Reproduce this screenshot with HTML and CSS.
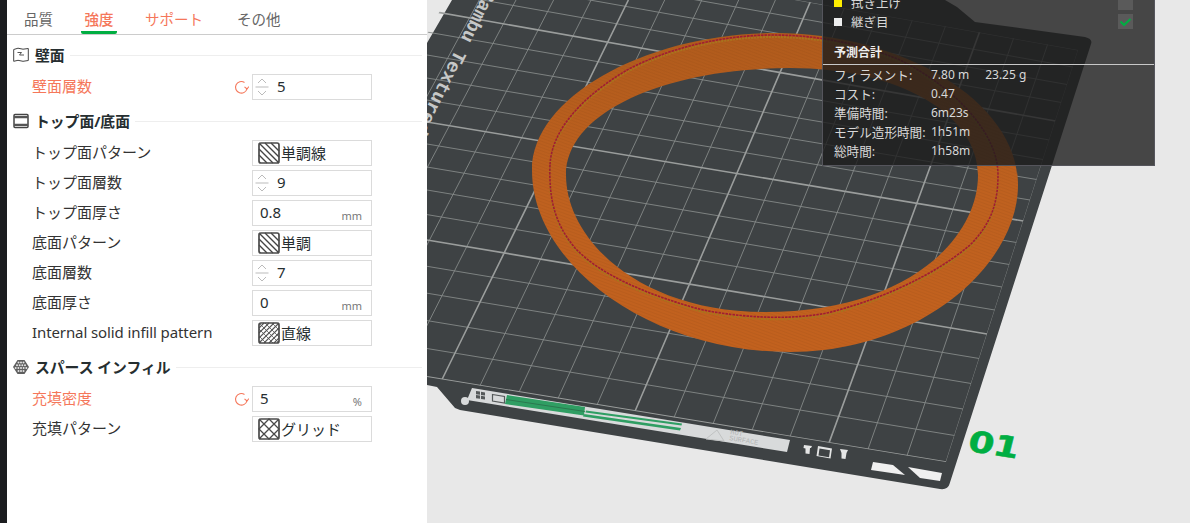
FILE: index.html
```html
<!DOCTYPE html>
<html lang="ja">
<head>
    <meta charset="UTF-8">
    <title>Slicer</title>
    <link rel="stylesheet" href="styles.css">
</head>
<body>
    <div class="app">
        <div class="edge"></div>

        <aside class="panel">
            <nav class="tabs">
                <span class="tab">品質</span>
                <span class="tab tab-active">強度</span>
                <span class="tab tab-changed">サポート</span>
                <span class="tab">その他</span>
            </nav>

            <section class="group">
                <h2 class="group-title">
                    <svg class="group-icon" viewBox="0 0 16 16"><path d="M.7 2.500L5 1.200l5 1 5.300-.7v12l-5.300.8-5-1-4.300 1z" fill="none" stroke="#444" stroke-width="1"/><path d="M4.500 5.500h4l-2 2.500h4.500" fill="none" stroke="#555" stroke-width="1"/></svg>
                    <span>壁面</span>
                    <i class="group-line"></i>
                </h2>
                <div class="row">
                    <label class="row-label changed">壁面層数</label>
                    <svg class="reset" viewBox="0 0 15 15"><path d="M13 8.500A5.800 5.800 0 1 1 10.500 2.500" fill="none" stroke="#f5775a" stroke-width="1.100"/><path d="M10.500 6.800l2.500 2.200 1.900-2.400" fill="none" stroke="#f5775a" stroke-width="1.100"/></svg>
                    <div class="field">
                        <span class="spin"><svg viewBox="0 0 14 22"><path d="M3 7l4-4 4 4M0.500 11h13M3 15l4 4 4-4" fill="none" stroke="#bbb" stroke-width="1"/></svg></span>
                        <span class="value">5</span>
                    </div>
                </div>
            </section>

            <section class="group">
                <h2 class="group-title">
                    <svg class="group-icon" viewBox="0 0 16 16"><rect x="1" y="1.500" width="14" height="13" rx="1" fill="none" stroke="#444" stroke-width="1.500"/><path d="M1 4.200h14M1 11.800h14" stroke="#555" stroke-width="2.200"/></svg>
                    <span>トップ面/底面</span>
                    <i class="group-line"></i>
                </h2>
                <div class="row">
                    <label class="row-label">トップ面パターン</label>
                    <div class="field field-combo">
                        <svg class="pattern" viewBox="0 0 22 22"><use href="#hatch-mono"/></svg>
                        <span>単調線</span>
                    </div>
                </div>
                <div class="row">
                    <label class="row-label">トップ面層数</label>
                    <div class="field">
                        <span class="spin"><svg viewBox="0 0 14 22"><path d="M3 7l4-4 4 4M0.500 11h13M3 15l4 4 4-4" fill="none" stroke="#bbb" stroke-width="1"/></svg></span>
                        <span class="value">9</span>
                    </div>
                </div>
                <div class="row">
                    <label class="row-label">トップ面厚さ</label>
                    <div class="field field-unit">
                        <span class="value">0.8</span>
                        <span class="unit">mm</span>
                    </div>
                </div>
                <div class="row">
                    <label class="row-label">底面パターン</label>
                    <div class="field field-combo">
                        <svg class="pattern" viewBox="0 0 22 22"><use href="#hatch-mono"/></svg>
                        <span>単調</span>
                    </div>
                </div>
                <div class="row">
                    <label class="row-label">底面層数</label>
                    <div class="field">
                        <span class="spin"><svg viewBox="0 0 14 22"><path d="M3 7l4-4 4 4M0.500 11h13M3 15l4 4 4-4" fill="none" stroke="#bbb" stroke-width="1"/></svg></span>
                        <span class="value">7</span>
                    </div>
                </div>
                <div class="row">
                    <label class="row-label">底面厚さ</label>
                    <div class="field field-unit">
                        <span class="value">0</span>
                        <span class="unit">mm</span>
                    </div>
                </div>
                <div class="row">
                    <label class="row-label row-label-latin">Internal solid infill pattern</label>
                    <div class="field field-combo">
                        <svg class="pattern" viewBox="0 0 22 22"><path d="M1 6L6 1M1 11L11 1M1 16L16 1M1 21L21 1M6 21L21 6M11 21L21 11M16 21l5-5" stroke="#555" stroke-width="1.100"/><path d="M1 14l7 7M1 7l14 14M1 1l20 20M7 1l14 14M14 1l7 7" stroke="#555" stroke-width="0.800"/><rect x="1" y="1" width="20" height="20" rx="2" fill="none" stroke="#4a4a4a" stroke-width="1.700"/></svg>
                        <span>直線</span>
                    </div>
                </div>
            </section>

            <section class="group">
                <h2 class="group-title">
                    <svg class="group-icon" viewBox="0 0 16 16">
                        <path d="M4.500 1h7L16 8l-4.500 7h-7L0 8z" fill="#5f5f5f"/>
                        <g fill="#e4e4e4">
                            <circle cx="5.500" cy="3.500" r="1"/><circle cx="8" cy="3.500" r="1"/><circle cx="10.500" cy="3.500" r="1"/>
                            <circle cx="4" cy="6.300" r="1"/><circle cx="6.700" cy="6.300" r="1"/><circle cx="9.300" cy="6.300" r="1"/><circle cx="12" cy="6.300" r="1"/>
                            <circle cx="2.700" cy="9.100" r="1"/><circle cx="5.400" cy="9.100" r="1"/><circle cx="8" cy="9.100" r="1"/><circle cx="10.600" cy="9.100" r="1"/><circle cx="13.300" cy="9.100" r="1"/>
                            <circle cx="5.500" cy="12" r="1"/><circle cx="8" cy="12" r="1"/><circle cx="10.500" cy="12" r="1"/>
                        </g>
                    </svg>
                    <span>スパース インフィル</span>
                    <i class="group-line"></i>
                </h2>
                <div class="row">
                    <label class="row-label changed">充填密度</label>
                    <svg class="reset" viewBox="0 0 15 15"><path d="M13 8.500A5.800 5.800 0 1 1 10.500 2.500" fill="none" stroke="#f5775a" stroke-width="1.100"/><path d="M10.500 6.800l2.500 2.200 1.900-2.400" fill="none" stroke="#f5775a" stroke-width="1.100"/></svg>
                    <div class="field field-unit">
                        <span class="value">5</span>
                        <span class="unit">%</span>
                    </div>
                </div>
                <div class="row">
                    <label class="row-label">充填パターン</label>
                    <div class="field field-combo">
                        <svg class="pattern" viewBox="0 0 22 22"><path d="M1 11L11 1l10 10-10 10zM1 1l20 20M21 1L1 21" fill="none" stroke="#4a4a4a" stroke-width="1.300"/><rect x="1" y="1" width="20" height="20" rx="2" fill="none" stroke="#4a4a4a" stroke-width="1.700"/></svg>
                        <span>グリッド</span>
                    </div>
                </div>
            </section>

            <svg class="defs" width="0" height="0">
                <g id="hatch-mono">
                    <path d="M1 7l14 14M1 1l20 20M7 1l14 14M1 13l8 8M13 1l8 8" stroke="#444" stroke-width="1.400"/>
                    <rect x="1" y="1" width="20" height="20" rx="2" fill="none" stroke="#4a4a4a" stroke-width="1.700"/>
                </g>
            </svg>
        </aside>

        <main class="view">
            <!-- viewBox keeps window coordinates, so the plate numbers read as screen pixels -->
            <svg class="scene" viewBox="427 0 763 523">
                <defs>
                    <clipPath id="grid-clip"><path d="M427 377L946 462L1078 50L797 0H446L427 34z"/></clipPath>
                    <linearGradient id="ring-fill" x1="0" y1="0" x2="0" y2="1">
                        <stop offset="0" stop-color="#b05b1c"/>
                        <stop offset="0.500" stop-color="#bf611f"/>
                        <stop offset="1" stop-color="#c2611e"/>
                    </linearGradient>
                    <pattern id="ring-grain" width="3" height="3" patternUnits="userSpaceOnUse" patternTransform="rotate(20)">
                        <path d="M0 1.500h3" stroke="#7a3a10" stroke-width="0.700" opacity="0.160"/>
                    </pattern>
                    <path id="seam-line" d="M550 165C549 195 553 222 575 248C600 275 650 296 703 310C745 318 790 320 827 313C880 300 935 275 970 245C990 225 998 205 998 175C998 130 950 85 900 60C860 43 815 35 773 35C725 35 670 47 627 70C590 92 552 125 550 165z"/>
                </defs>

                <path class="bed" d="M427 385L437 387L455 408L460 410L940 489Q948 490 949.500 484L1091 44Q1093 39 1085 37L975 22L957 7L945 0H452L427 43z"/>

                <g class="grid" clip-path="url(#grid-clip)">
                    <path d="M946 462L1094.300 0M907 455.700L1062.800 0M868 449.300L1027.100 0M790 436.600L955.400 0M752 430.300L920.200 0M713 423.900L884 0M674 417.500L847.700 0M597 404.900L775.400 0M558 398.500L738.700 0M519 392.200L701.800 0M480 385.700L664.700 0M403 373L591.100 0M364 366.700L553.600 0M325 360.300L516 0M287 354L479.200 0M248 347.700L441.400 0"/>
                    <path d="M427 348.500L954.500 435.500M427 320.600L963 409M427 293.200L971.200 383.500M427 266.300L979.200 358.500M427 214.600L994.800 310M427 190L1002 287M427 167L1009.400 264.500M427 144L1016.500 242.500M427 100L1030 200M427 78L1036.700 179.500M427 55L1043 159.500M427 32L1049.400 140M427 -9.800L1061.400 102.500M427 -28.800L1067 84.500M427 -48L1072.800 67M427 -65.900L1078 50"/>
                    <path class="grid-major" d="M829 442.900L991.300 0M635 411.200L811.100 0M442 379.500L628.400 0M427 376.900L946 462M427 240L987 334M427 122L1023.400 221M427 10.400L1055.500 121"/>
                </g>

                <text class="plate-name" transform="translate(486 -12) rotate(116.500)">Bambu Textured</text>

                <!-- ring: outer outline, then the hole cut with evenodd -->
                <path class="ring" fill-rule="evenodd" d="M532 170C532 95 650 33 775 33C900 33 1018 100 1018 185C1018 265 920 352 790 352C650 352 532 265 532 170zM566 175C566 240 640 312 765 312C905 312 978 240 978 175C978 115 900 68 790 68C670 68 566 110 566 175z"/>
                <path class="ring-grain" fill-rule="evenodd" d="M532 170C532 95 650 33 775 33C900 33 1018 100 1018 185C1018 265 920 352 790 352C650 352 532 265 532 170zM566 175C566 240 640 312 765 312C905 312 978 240 978 175C978 115 900 68 790 68C670 68 566 110 566 175z"/>
                <use class="ring-lip" href="#seam-line" x="0" y="2"/>
                <use class="ring-seam" href="#seam-line"/>

                <path class="strip" d="M472 388L790 440L787 452L467 400z"/>
                <circle class="strip" cx="465" cy="401" r="4"/>
                <path class="strip-dark" d="M476 391l4 .6v3.200l-4-.6zM481 391.800l4 .6v3.200l-4-.6zM476 395l4 .6v3.200l-4-.6zM481 395.800l4 .6v3.200l-4-.6z"/>
                <path class="strip-box" d="M492.500 394.500l12 2v6.500l-12-2z"/>
                <path class="strip-bar" d="M507 395L585 407L584 415.500L505 404zM586 410.500L682 423.500L681.500 425.500L585.500 412.500zM584 414L681 428L680 430.500L583 416.500z"/>
                <path class="strip-line" d="M506 399.500L585 411.500"/>
                <text class="strip-text" transform="translate(730 434) rotate(9.500)">HOT</text>
                <text class="strip-text" transform="translate(729 440) rotate(9.500)">SURFACE</text>
                <path class="strip-tri" d="M706 439L717 430L724 441z"/>

                <path class="bed-mark" d="M804 445l8 1-1 2-1 0-.5 6-4-.5 0-5-2-.5zM818 446l14 2.500-1.500 10-14-2.500zM840 449l8 1-1.500 3-1 6-4-.5 0-5.500z"/>
                <path class="bed-mark-box" d="M819.500 448.500l10.500 1.800-1 7-10.500-1.800z"/>
                <path class="bed-cut" d="M873 462L893 465L905 475L871 470z"/>
                <path class="bed-cut" d="M908 467L942 473L940 481L920 478z"/>

                <text class="plate-number" transform="translate(969 451) skewY(9) scale(1.300 1.050)">01</text>
            </svg>

            <div class="stats">
                <div class="legend">
                    <div class="legend-row legend-clipped"><i class="swatch swatch-yellow"></i><span>拭き上げ</span><i class="check"></i></div>
                    <div class="legend-row">
                        <i class="swatch swatch-white"></i><span>継ぎ目</span>
                        <i class="check"><svg viewBox="0 0 15 15"><path d="M2.500 7.500l3.500 3.500 6.500-6" fill="none" stroke="#00ae42" stroke-width="2"/></svg></i>
                    </div>
                </div>
                <h3 class="stats-title">予測合計</h3>
                <dl class="stats-list">
                    <dt>フィラメント:</dt><dd>7.80 m<span class="stats-weight">23.25 g</span></dd>
                    <dt>コスト:</dt><dd>0.47</dd>
                    <dt>準備時間:</dt><dd>6m23s</dd>
                    <dt>モデル造形時間:</dt><dd>1h51m</dd>
                    <dt>総時間:</dt><dd>1h58m</dd>
                </dl>
            </div>
        </main>
    </div>
</body>
</html>
```

FILE: styles.css
```css
* {
    box-sizing: border-box;
}
html, body {
    margin: 0;
    height: 100%;
    overflow: hidden;
}
body {
    font-family: "Noto Sans", "Noto Sans CJK JP", sans-serif;
    font-size: 15px;
    color: #333;
    background-color: #e8e8e8;
}
.app {
    display: flex;
    height: 523px;
}
.edge {
    width: 7px;
    background-color: #1b1d1f;
}
.panel {
    width: 420px;
    background-color: #fff;
    padding-bottom: 10px;
}
.tabs {
    display: flex;
    height: 35px;
    padding-left: 17px;
    border-bottom: 1px solid #ccc;
    font-size: 14.500px;
}
.tab {
    height: 34px;
    line-height: 38px;
    color: #666;
    margin-right: 28px;
}
.tab-active {
    color: #f5775a;
    font-weight: 500;
    padding: 0 3.500px;
    border-bottom: 3px solid #00ae42;
    border-radius: 0 0 2px 2px;
}
.tab-changed {
    color: #f5775a;
    margin-right: 34px;
}
.group {
    padding-top: 9px;
}
.group + .group {
    padding-top: 6px;
}
.group-title {
    display: flex;
    align-items: center;
    height: 22px;
    margin: 0 5px 8px 6px;
    font-size: 14.800px;
    font-weight: 700;
    color: #262e30;
}
.group-title span {
    margin-top: -2px;
}
.group-icon {
    width: 16px;
    height: 16px;
    margin-right: 6px;
}
.group-line {
    flex: 1;
    height: 1px;
    margin-left: 5px;
    background-color: #eee;
}
.row {
    display: flex;
    align-items: center;
    height: 26px;
    margin-bottom: 4px;
    padding-left: 25px;
}
.row-label {
    flex: 1;
    color: #333;
    margin-top: -3px;
}
.row-label-latin {
    letter-spacing: -0.100px;
}
.row .changed {
    color: #f5775a;
}
.reset {
    width: 15px;
    height: 15px;
    margin-right: 3px;
}
.field {
    display: flex;
    align-items: center;
    width: 120px;
    height: 26px;
    margin-right: 55px;
    border: 1px solid #dbdbdb;
    color: #262e30;
}
.spin {
    display: flex;
    width: 14px;
    height: 22px;
    margin-left: 2px;
    margin-right: 8px;
}
.field-unit {
    justify-content: space-between;
    padding: 0 9px 0 7px;
}
.value {
    margin-top: -2px;
}
.unit {
    font-size: 11px;
    color: #777;
    padding-top: 4px;
}
.field-combo {
    padding-left: 5px;
}
.field-combo span {
    margin-top: -2px;
}
.pattern {
    width: 22px;
    height: 22px;
    margin-right: 1px;
}
.defs {
    position: absolute;
}
.view {
    position: relative;
    flex: 1;
    overflow: hidden;
}
.scene {
    position: absolute;
    left: 0;
    top: 0;
    width: 763px;
    height: 523px;
}
.bed {
    fill: #3e4244;
}
.grid path {
    fill: none;
    stroke: #858988;
    stroke-width: 0.900;
}
.grid .grid-major {
    stroke: #9a9d9c;
    stroke-width: 1.600;
}
.plate-name {
    font-family: "Liberation Mono", monospace;
    font-size: 19px;
    font-weight: 700;
    fill: #c6c8c8;
}
.ring {
    fill: url(#ring-fill);
}
.ring-grain {
    fill: url(#ring-grain);
}
.ring-lip {
    fill: none;
    stroke: #a8741e;
    stroke-width: 2;
    stroke-dasharray: 2 1;
}
.ring-seam {
    fill: none;
    stroke: #a01c34;
    stroke-width: 1.600;
    stroke-dasharray: 2.500 1;
}
.strip {
    fill: #d8dadb;
}
.strip-dark {
    fill: #55595a;
}
.strip-box {
    fill: none;
    stroke: #55595a;
    stroke-width: 1.200;
}
.strip-bar {
    fill: #2f9e63;
}
.strip-line {
    fill: none;
    stroke: #2a6e4a;
    stroke-width: 0.800;
}
.strip-text {
    font-family: "Liberation Mono", monospace;
    font-size: 7px;
    fill: #b4b6b6;
}
.strip-tri {
    fill: none;
    stroke: #c0c2c2;
}
.bed-mark {
    fill: #e4e5e5;
}
.bed-mark-box {
    fill: #3e4244;
}
.bed-cut {
    fill: #f0f0f0;
}
.plate-number {
    font-family: "DejaVu Sans", sans-serif;
    font-size: 28px;
    font-weight: 700;
    font-style: italic;
    fill: #00ae42;
    stroke: #00ae42;
    stroke-width: 0.500;
}
.stats {
    position: absolute;
    left: 395px;
    top: 0;
    width: 333px;
    height: 166px;
    background-color: rgba(29, 29, 29, 0.8);
    border-left: 1px solid #55555c;
    border-bottom: 1px solid #55555c;
    border-right: 1px solid #55555c;
    color: #d8d8d8;
    font-size: 12px;
    overflow: hidden;
}
.legend {
    margin-top: -7px;
}
.legend-row {
    display: flex;
    align-items: center;
    height: 19px;
    padding-left: 11px;
    font-size: 12.500px;
}
.legend-row span {
    flex: 1;
    margin-left: 9px;
}
.swatch {
    width: 8px;
    height: 8px;
}
.swatch-yellow {
    background-color: #ffee00;
}
.swatch-white {
    background-color: #eee;
}
.check {
    width: 15px;
    height: 15px;
    margin-right: 21px;
    background-color: #5a5a5a;
    display: flex;
}
.stats-title {
    margin: 12px 0 0;
    height: 21px;
    padding-left: 11px;
    font-size: 12px;
    font-weight: 700;
    color: #eee;
}
.stats-list {
    display: grid;
    grid-template-columns: 97px 1fr;
    grid-auto-rows: 19px;
    margin: 0;
    padding: 0 0 0 11px;
    border-top: 1px solid #c8c8c8;
    align-items: center;
}
.stats-list dt, .stats-list dd {
    margin: 0;
    white-space: nowrap;
}
.stats-list dt {
    font-size: 12.600px;
}
.stats-weight {
    margin-left: 16px;
}
```
